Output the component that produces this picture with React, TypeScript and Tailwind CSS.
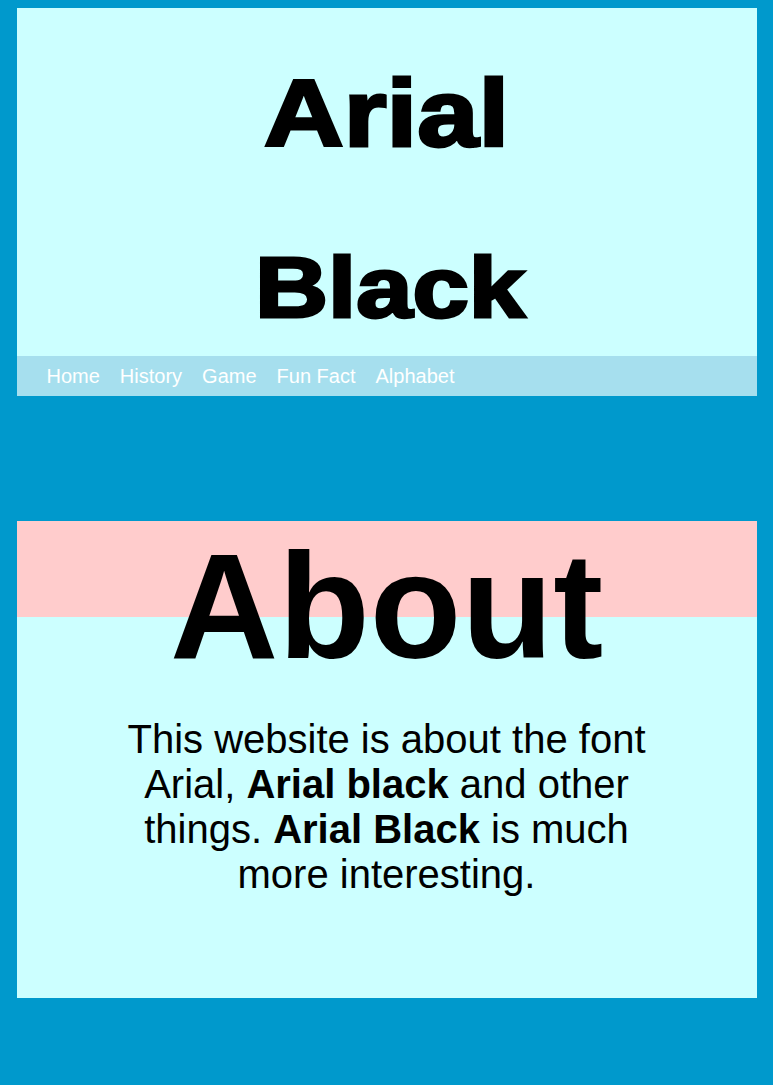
export default function App() {
  const links = ["Home", "History", "Game", "Fun Fact", "Alphabet"];
  return (
    <div
      className="min-h-[1085px] bg-[#0099cc] pt-[8px] pb-[87px]"
      style={{ fontFamily: '"Liberation Sans", Arial, sans-serif' }}
    >
      <div className="mx-auto w-[740px]">
        <header className="bg-[#ccffff]">
          <div className="flex flex-col items-center pt-[58px] pb-[26px] text-black font-bold">
            <div className="scale-x-[1.16] text-[95px] leading-[95px] [-webkit-text-stroke:3px_black]">
              Arial
            </div>
            <div className="mt-[84px] pl-[6px] scale-x-[1.19] text-[85px] leading-[85px] [-webkit-text-stroke:3px_black]">
              Black
            </div>
          </div>
          <nav className="flex h-[40px] items-start bg-[#a6dfee] pl-[20px]">
            {links.map((l) => (
              <a key={l} className="px-[10px] text-[20px] leading-[40px] text-white">
                {l}
              </a>
            ))}
          </nav>
        </header>

        <section className="mt-[125px] bg-[linear-gradient(to_bottom,#ffcccc_96px,#ccffff_96px)] pt-[10px] pb-[101px] text-center text-black">
          <h1 className="text-[150px] leading-[150px] font-bold">About</h1>
          <p className="mx-auto mt-[36px] w-[540px] text-[40px] leading-[45px]">
            This website is about the font Arial, <b>Arial black</b> and other things.{" "}
            <b>Arial Black</b> is much more interesting.
          </p>
        </section>
      </div>
    </div>
  );
}
